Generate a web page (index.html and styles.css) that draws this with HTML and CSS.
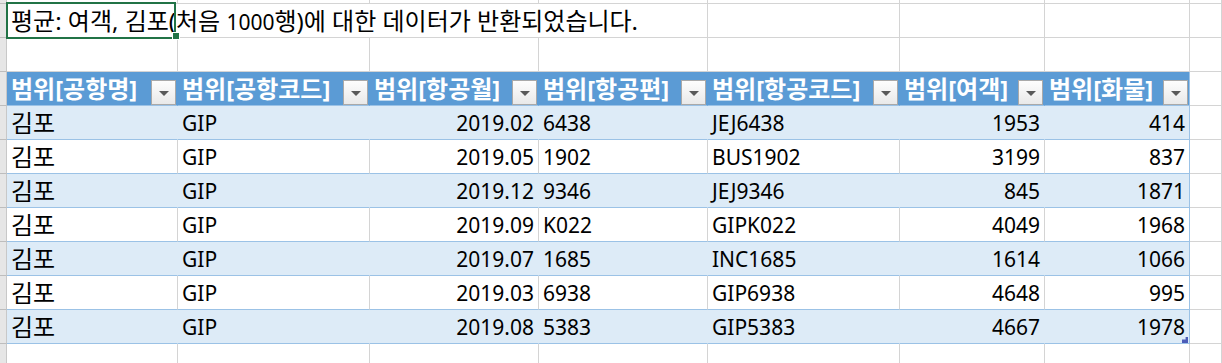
FILE: index.html
```html
<!DOCTYPE html>
<html lang="ko">
<head>
<meta charset="utf-8">
<link rel="stylesheet" href="styles.css">
</head>
<body>
<div class="sheet">
  <div class="row top">
    <div class="c strip"></div><div class="c"></div><div class="c"></div><div class="c"></div><div class="c"></div><div class="c"></div><div class="c"></div><div class="c"></div><div class="c last"></div>
  </div>
  <div class="row">
    <div class="c strip"></div>
    <div class="c span4 msg"><span>평균: 여객, 김포(처음 <span class="num">1000</span>행)에 대한 데이터가 반환되었습니다.</span></div>
    <div class="c"></div><div class="c"></div><div class="c"></div><div class="c last"></div>
  </div>
  <div class="row">
    <div class="c strip"></div><div class="c"></div><div class="c"></div><div class="c"></div><div class="c"></div><div class="c"></div><div class="c"></div><div class="c"></div><div class="c last"></div>
  </div>
  <div class="row head">
    <div class="c strip"></div>
    <div class="c t"><span class="k">범위[공항명]</span><i class="dd"></i></div>
    <div class="c t"><span class="k">범위[공항코드]</span><i class="dd"></i></div>
    <div class="c t"><span class="k">범위[항공월]</span><i class="dd"></i></div>
    <div class="c t"><span class="k">범위[항공편]</span><i class="dd"></i></div>
    <div class="c t"><span class="k">범위[항공코드]</span><i class="dd"></i></div>
    <div class="c t"><span class="k">범위[여객]</span><i class="dd"></i></div>
    <div class="c t tend"><span class="k">범위[화물]</span><i class="dd"></i></div>
    <div class="c last"></div>
  </div>
  <div class="row band">
    <div class="c strip"></div><div class="c t k">김포</div><div class="c t">GIP</div><div class="c t r">2019.02</div><div class="c t">6438</div><div class="c t">JEJ6438</div><div class="c t r">1953</div><div class="c t r tend">414</div><div class="c last"></div>
  </div>
  <div class="row plain">
    <div class="c strip"></div><div class="c t k">김포</div><div class="c t">GIP</div><div class="c t r">2019.05</div><div class="c t">1902</div><div class="c t">BUS1902</div><div class="c t r">3199</div><div class="c t r tend">837</div><div class="c last"></div>
  </div>
  <div class="row band">
    <div class="c strip"></div><div class="c t k">김포</div><div class="c t">GIP</div><div class="c t r">2019.12</div><div class="c t">9346</div><div class="c t">JEJ9346</div><div class="c t r">845</div><div class="c t r tend">1871</div><div class="c last"></div>
  </div>
  <div class="row plain">
    <div class="c strip"></div><div class="c t k">김포</div><div class="c t">GIP</div><div class="c t r">2019.09</div><div class="c t">K022</div><div class="c t">GIPK022</div><div class="c t r">4049</div><div class="c t r tend">1968</div><div class="c last"></div>
  </div>
  <div class="row band">
    <div class="c strip"></div><div class="c t k">김포</div><div class="c t">GIP</div><div class="c t r">2019.07</div><div class="c t">1685</div><div class="c t">INC1685</div><div class="c t r">1614</div><div class="c t r tend">1066</div><div class="c last"></div>
  </div>
  <div class="row plain">
    <div class="c strip"></div><div class="c t k">김포</div><div class="c t">GIP</div><div class="c t r">2019.03</div><div class="c t">6938</div><div class="c t">GIP6938</div><div class="c t r">4648</div><div class="c t r tend">995</div><div class="c last"></div>
  </div>
  <div class="row band">
    <div class="c strip"></div><div class="c t k">김포</div><div class="c t">GIP</div><div class="c t r">2019.08</div><div class="c t">5383</div><div class="c t">GIP5383</div><div class="c t r">4667</div><div class="c t r tend">1978</div><div class="c last"></div>
  </div>
  <div class="row">
    <div class="c strip"></div><div class="c"></div><div class="c"></div><div class="c"></div><div class="c"></div><div class="c"></div><div class="c"></div><div class="c"></div><div class="c last"></div>
  </div>
  <div class="sel"></div>
  <div class="handle"></div>
  <div class="resize"></div>
</div>
</body>
</html>
```
FILE: styles.css
```css
html, body {
  margin: 0;
  padding: 0;
  background: #ffffff;
  overflow: hidden;
}
body {
  font-family: "Noto Sans", "Noto Sans CJK KR", sans-serif;
  font-size: 21px;
  color: #000;
}
.sheet {
  position: relative;
  width: 1222px;
  height: 363px;
  overflow: hidden;
  --cols: 7px 171px 192px 169px 169px 192px 145px 145px 1fr;
}
.row {
  display: grid;
  grid-template-columns: var(--cols);
  height: 34px;
}
.row.top {
  height: 4px;
}
.c {
  box-sizing: border-box;
  border-right: 1px solid #d4d4d4;
  border-bottom: 1px solid #d4d4d4;
  padding: 0 4px;
  display: flex;
  align-items: center;
  white-space: nowrap;
  min-width: 0;
  line-height: 1;
}
.k {
  font-size: 24px;
}
.num {
  font-size: 21px;
}
.strip {
  background: #e6e6e6;
  border-right-color: #c8c8c8;
  border-bottom-color: #bdbdbd;
  padding: 0;
}
.span4 {
  grid-column: span 4;
}
.msg {
  font-size: 24px;
  padding-left: 4px;
  padding-top: 1px;
}
.r {
  justify-content: flex-end;
}
.head .t {
  background: #5b9bd5;
  color: #fff;
  font-weight: bold;
  border-right-color: #5b9bd5;
  border-bottom-color: #9bc2e6;
  justify-content: space-between;
  align-items: flex-end;
  padding: 0 1px 0 4px;
}
.head .t span {
  align-self: center;
  padding-top: 1px;
}
.head .tend {
  border-right-color: #9bc2e6;
}
.dd {
  box-sizing: border-box;
  width: 25px;
  height: 25px;
  border: 1px solid #a9a9a9;
  background: linear-gradient(#fdfdfd, #e9e9e9);
  display: flex;
  align-items: center;
  justify-content: center;
}
.dd::after {
  content: "";
  width: 0;
  height: 0;
  border-left: 5px solid transparent;
  border-right: 5px solid transparent;
  border-top: 5px solid #595959;
  margin-top: 1px;
}
.band .t {
  background: #ddebf7;
  border-right-color: #ddebf7;
  border-bottom-color: #9bc2e6;
}
.plain .t {
  border-bottom-color: #9bc2e6;
}
.t {
  padding-top: 1px;
}
.row .tend {
  border-right-color: #9bc2e6;
}
.sel {
  position: absolute;
  left: 6px;
  top: 2px;
  width: 170px;
  height: 37px;
  box-sizing: border-box;
  border: 2px solid #217346;
}
.handle {
  position: absolute;
  left: 173px;
  top: 33px;
  width: 6px;
  height: 6px;
  background: #217346;
  box-shadow: 0 0 0 1px #fff;
}
.resize {
  position: absolute;
  left: 1182px;
  top: 337px;
  width: 6px;
  height: 6px;
  background: #4c5cb8;
  clip-path: polygon(100% 0, 100% 100%, 0 100%, 0 40%, 60% 40%, 60% 0);
}
```
